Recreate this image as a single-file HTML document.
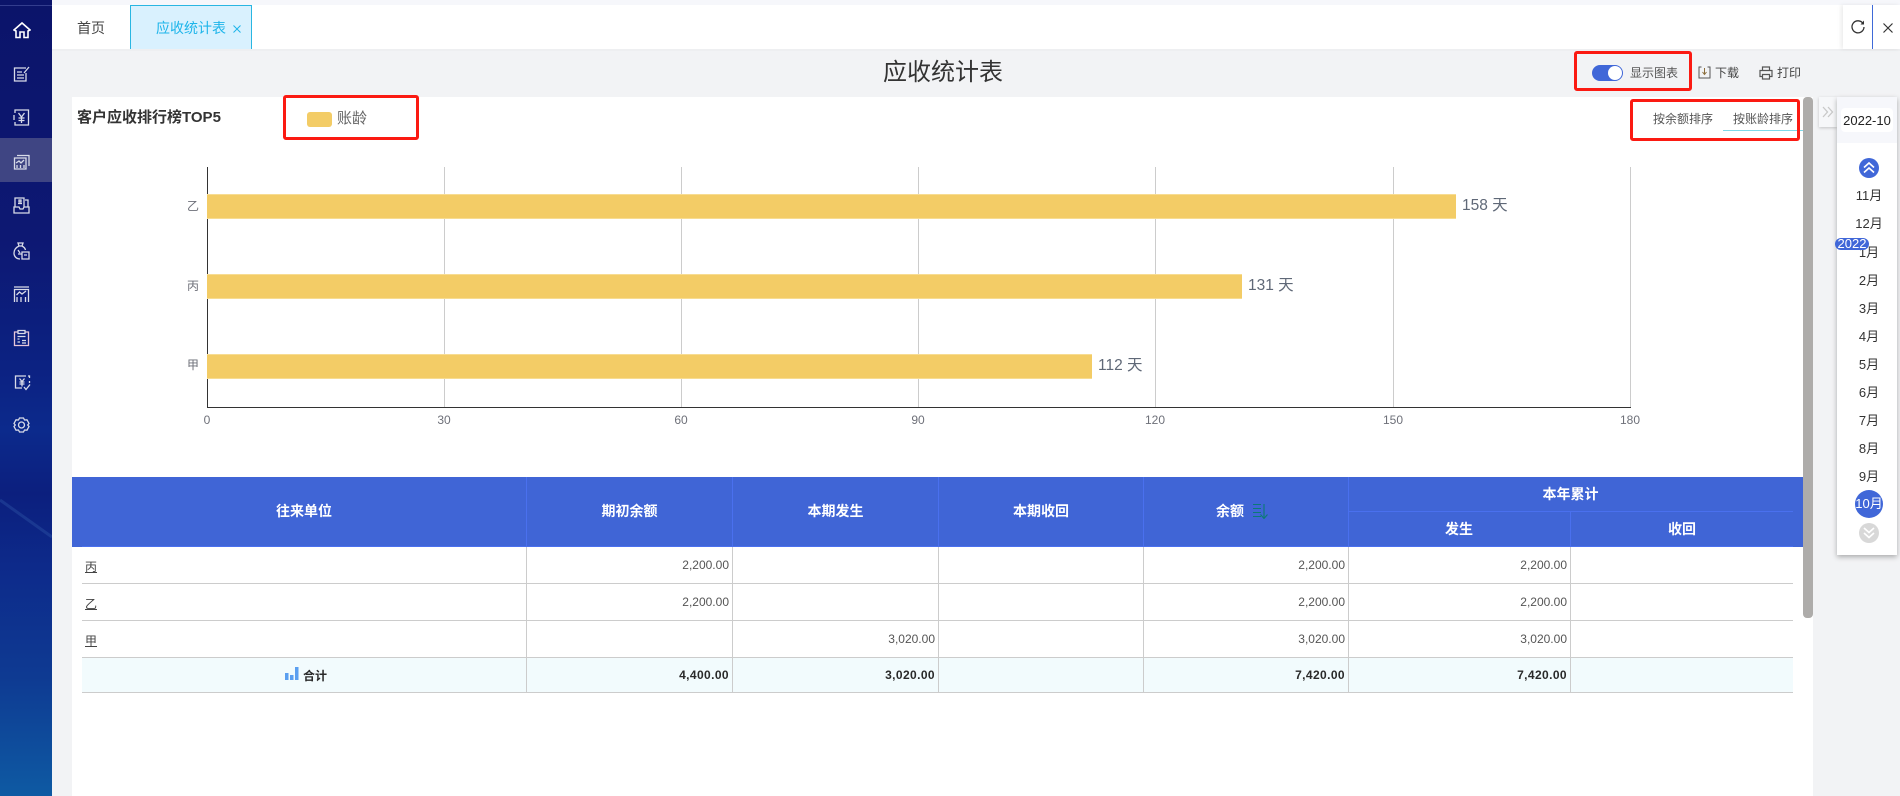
<!DOCTYPE html>
<html lang="zh-CN"><head><meta charset="utf-8"><title>应收统计表</title>
<style>
*{box-sizing:border-box}
html,body{margin:0;padding:0;width:1900px;height:796px;overflow:hidden;background:#f2f3f5;font-family:"Liberation Sans","Noto Sans CJK SC",sans-serif;color:#333}
.a{position:absolute}
.t{position:absolute;white-space:nowrap;line-height:16px;font-size:12px}
.line{position:absolute;background:#ccc}
.redbox{position:absolute;border:3px solid #fb1a12;border-radius:3px}
.mon{position:absolute;left:1839px;width:60px;text-align:center;font-size:12px;line-height:16px;color:#333}
.n{position:absolute;width:120px;text-align:right;font-size:12px;line-height:16px;color:#555;white-space:nowrap}
.b{font-weight:bold;color:#2a2a2a}
.n.b{letter-spacing:.4px}
.h{position:absolute;color:#fff;font-weight:bold;font-size:13px;line-height:16px;text-align:center;white-space:nowrap}
.u{position:absolute;left:85px;font-size:12px;line-height:16px;color:#444;text-decoration:underline}
.tick{position:absolute;top:412px;width:40px;text-align:center;font-size:12px;line-height:16px;color:#6e7079}
.yl{position:absolute;left:187px;font-size:12px;line-height:16px;color:#6e7079}
.val{position:absolute;font-size:15.500px;line-height:18px;color:#5f6877;white-space:nowrap}
.bar{position:absolute;left:207px;height:25px;background:#f3cc66;border-top:1px solid #f7dc92;border-bottom:1px solid #f7dc92}
.ic{position:absolute;fill:none;stroke:#d8dbe8;stroke-width:1.3}
</style></head><body>

<!-- sidebar -->
<div class="a" style="left:0;top:0;width:52px;height:796px;background:linear-gradient(180deg,#0b146a 0,#0d1873 30%,#0c2384 48%,#0c2a8c 54%,#0c1f7e 62%,#0d2b8b 72%,#0e3a92 85%,#0e5aa3 100%)"></div>
<svg class="a" style="left:0;top:490px" width="52" height="60"><path d="M0 10L52 47" stroke="#2f58a8" stroke-width="3" opacity=".4" fill="none"/></svg>
<div class="a" style="left:0;top:5px;width:52px;height:1px;background:#333d8e"></div>
<div class="a" style="left:0;top:138px;width:52px;height:44px;background:#3f4583"></div>

<svg class="ic" style="left:13px;top:21px;stroke:#fff;stroke-width:1.6" width="18" height="18" viewBox="0 0 18 18"><path d="M1 9L9 2L17 9L15 10V16.500H11V11H7V16.500H3V10Z"/></svg>
<svg class="ic" style="left:13px;top:66px" width="18" height="16" viewBox="0 0 18 16"><path d="M13 2H1.500V15H13V7M4 6H9M4 9H11M4 12H11"/><path d="M11 7L16 1"/></svg>
<svg class="ic" style="left:13px;top:109px" width="17" height="17" viewBox="0 0 17 17"><path d="M2 4V1H15.500V16H2V13M1 6V11" /><path d="M5.500 4L8.500 8L11.500 4M8.500 8V14M5.500 9H11.500M5.500 11.500H11.500"/></svg>
<svg class="ic" style="left:13px;top:153px" width="17" height="17" viewBox="0 0 17 17"><path d="M4 2.500H16V13M1.500 5H13V16H1.500Z"/><path d="M3 10L6 8L8 10L11 7M4 15V12M7.500 15V12M11 15V12"/></svg>
<svg class="ic" style="left:13px;top:197px" width="17" height="17" viewBox="0 0 17 17"><path d="M2 10V1H11V10M12 3H15V10M1 10H6L7 12H10L11 10H16V16H1Z"/><path d="M5 6.500H9M6 3H8V5H6Z"/></svg>
<svg class="ic" style="left:13px;top:242px" width="17" height="18" viewBox="0 0 17 18"><path d="M5 1H10L9 4H6ZM6 4C2 6 1 9 1 11C1 15 4 17 7 17M9 4C11 5 12 6 12.500 8"/><path d="M5 8L7 11M5 12H9M9 10H16V17H9ZM11 13H14"/></svg>
<svg class="ic" style="left:13px;top:286px" width="17" height="17" viewBox="0 0 17 17"><path d="M1 1H16M1.500 16V3.500H15.500V16M4 16V11M8 16V11M12.500 16V11"/><path d="M3.500 9L6.500 6L9 8L13 5"/></svg>
<svg class="ic" style="left:13px;top:329px" width="17" height="18" viewBox="0 0 17 18"><path d="M5 3H1.500V16.500H15.500V3H12" stroke="#e7c6d8"/><path d="M5 1.500H12V4.500H5ZM4.500 7.500H12.500M4.500 10H6.500M9 11.500H13M4.500 13H7M9 14H13"/></svg>
<svg class="ic" style="left:14px;top:375px" width="17" height="16" viewBox="0 0 17 16"><path d="M12 1H1.500V13H8M14 1H15.500V3M15.500 6V8"/><path d="M5.500 3.500L8 6.500L10.500 3.500M8 6.500V11.500M5.500 7H10.500M5.500 9H10.500"/><path d="M10 12L12 14.500L16 9.500"/></svg>
<svg class="ic" style="left:13px;top:417px" width="17" height="16" viewBox="0 0 17 16"><path d="M6.500 1H10.500L11.500 3L14 2.800L16 6.500L14.700 8L16 9.500L14 13.200L11.500 13L10.500 15H6.500L5.500 13L3 13.200L1 9.500L2.300 8L1 6.500L3 2.800L5.500 3Z"/><circle cx="8.500" cy="8" r="3"/></svg>

<!-- tab bar -->
<div class="a" style="left:52px;top:0;width:1848px;height:5px;background:#f6f7fb"></div>
<div class="a" style="left:52px;top:5px;width:1848px;height:44px;background:#fff"></div>
<div class="a" style="left:52px;top:49px;width:1848px;height:2px;background:#eeeff1"></div>
<div class="t" style="left:77px;top:20px;font-size:14px;color:#444">首页</div>
<div class="a" style="left:130px;top:5px;width:122px;height:44px;background:#d9f1fe;border:1px solid #29b6e2;border-bottom:none"></div>
<div class="t" style="left:156px;top:20px;font-size:14px;color:#1eb5ea">应收统计表</div>
<svg class="a" style="left:233px;top:25px" width="8" height="8"><path d="M.5.5L7.500 7.500M7.500.5L.5 7.500" stroke="#1eb5ea" fill="none"/></svg>

<div class="a" style="left:1843px;top:5px;width:57px;height:44px;background:#fff;box-shadow:-2px 0 4px rgba(0,0,0,.08)"></div>
<div class="a" style="left:1872px;top:5px;width:1px;height:44px;background:#3f6ad8"></div>
<svg class="a" style="left:1850px;top:19px" width="16" height="16" viewBox="0 0 16 16"><path d="M13 4.500A6 6 0 1 0 14 8" stroke="#333" stroke-width="1.300" fill="none"/><path d="M14 1.500V5.500H10.500Z" fill="#333"/></svg>
<svg class="a" style="left:1883px;top:23px" width="10" height="10"><path d="M.5.5L9.500 9.500M9.500.5L.5 9.500" stroke="#333" stroke-width="1.200" fill="none"/></svg>

<!-- page title -->
<div class="t" style="left:883px;top:57px;font-size:24px;line-height:32px;color:#333">应收统计表</div>
<div class="a" style="left:1592px;top:65px;width:31px;height:16px;border-radius:8px;background:#4067d8"></div>
<div class="a" style="left:1608px;top:66px;width:14px;height:14px;border-radius:50%;background:#fff"></div>
<div class="t" style="left:1630px;top:65px;color:#555">显示图表</div>
<svg class="a" style="left:1698px;top:66px" width="13" height="13" viewBox="0 0 13 13"><path d="M3.500 1H1V12H12V1H9.500" stroke="#555" fill="none"/><path d="M6.500 2V8M4.500 6L6.500 8.500L8.500 6" stroke="#8a6d3b" fill="none"/></svg>
<div class="t" style="left:1715px;top:65px;color:#444">下载</div>
<svg class="a" style="left:1759px;top:66px" width="14" height="14" viewBox="0 0 14 14"><path d="M3.500 4V1H10.500V4M3.500 10.500H1V4.500H13V10.500H10.500M3.500 8.500H10.500V13H3.500Z" stroke="#555" stroke-width="1.200" fill="none"/></svg>
<div class="t" style="left:1777px;top:65px;color:#444">打印</div>

<!-- card -->
<div class="a" style="left:72px;top:97px;width:1741px;height:699px;background:#fff"></div>
<div class="a" style="left:1803px;top:97px;width:10px;height:521px;background:#aeacaa;border-radius:4px"></div>

<div class="t" style="left:77px;top:110px;font-size:15px;font-weight:bold;color:#333">客户应收排行榜TOP5</div>
<div class="a" style="left:307px;top:112px;width:25px;height:15px;border-radius:3px;background:#f3cc66"></div>
<div class="t" style="left:337px;top:111px;font-size:15px;color:#666">账龄</div>
<div class="t" style="left:1653px;top:111px;color:#555">按余额排序</div>
<div class="t" style="left:1733px;top:111px;color:#555">按账龄排序</div>
<div class="a" style="left:1723px;top:130px;width:80px;height:1px;background:#7dd8e8"></div>

<!-- chart -->
<div class="line" style="left:444px;top:167px;width:1px;height:240px"></div>
<div class="line" style="left:681px;top:167px;width:1px;height:240px"></div>
<div class="line" style="left:918px;top:167px;width:1px;height:240px"></div>
<div class="line" style="left:1155px;top:167px;width:1px;height:240px"></div>
<div class="line" style="left:1393px;top:167px;width:1px;height:240px"></div>
<div class="line" style="left:1630px;top:167px;width:1px;height:240px"></div>
<div class="a" style="left:207px;top:167px;width:1px;height:241px;background:#333"></div>
<div class="a" style="left:207px;top:407px;width:1424px;height:1px;background:#333"></div>
<div class="bar" style="top:194px;width:1249px"></div>
<div class="bar" style="top:274px;width:1035px"></div>
<div class="bar" style="top:354px;width:885px"></div>
<div class="yl" style="top:198px">乙</div>
<div class="yl" style="top:278px">丙</div>
<div class="yl" style="top:357px">甲</div>
<div class="val" style="left:1462px;top:197px">158 天</div>
<div class="val" style="left:1248px;top:277px">131 天</div>
<div class="val" style="left:1098px;top:357px">112 天</div>
<div class="tick" style="left:187px">0</div>
<div class="tick" style="left:424px">30</div>
<div class="tick" style="left:661px">60</div>
<div class="tick" style="left:898px">90</div>
<div class="tick" style="left:1135px">120</div>
<div class="tick" style="left:1373px">150</div>
<div class="tick" style="left:1610px">180</div>

<!-- table header -->
<div class="a" style="left:72px;top:477px;width:1731px;height:70px;background:#4065d6"></div>
<div class="a" style="left:82px;top:546px;width:1711px;height:1px;background:#4a70ee"></div>
<div class="a" style="left:526px;top:477px;width:1px;height:69px;background:#4a70ee"></div>
<div class="a" style="left:732px;top:477px;width:1px;height:69px;background:#4a70ee"></div>
<div class="a" style="left:938px;top:477px;width:1px;height:69px;background:#4a70ee"></div>
<div class="a" style="left:1143px;top:477px;width:1px;height:69px;background:#4a70ee"></div>
<div class="a" style="left:1348px;top:477px;width:1px;height:69px;background:#4a70ee"></div>
<div class="a" style="left:1570px;top:511px;width:1px;height:35px;background:#4a70ee"></div>
<div class="a" style="left:1348px;top:511px;width:445px;height:1px;background:#4a70ee"></div>
<div class="h" style="left:82px;top:503px;width:444px;font-size:14px">往来单位</div>
<div class="h" style="left:527px;top:503px;width:205px;font-size:14px">期初余额</div>
<div class="h" style="left:733px;top:503px;width:205px;font-size:14px">本期发生</div>
<div class="h" style="left:939px;top:503px;width:204px;font-size:14px">本期收回</div>
<div class="h" style="left:1216px;top:503px;font-size:14px">余额</div>
<svg class="a" style="left:1252px;top:503px" width="16" height="16" viewBox="0 0 16 16"><path d="M1 1.500H9M1 5.500H9M1 9.500H9M1 13.500H9" stroke="#0b7a75" stroke-width="1.100" fill="none"/><path d="M12 1V15M8.500 11.500L12 15.500L15.500 11.500" stroke="#0b7a75" stroke-width="1.100" fill="none"/></svg>
<div class="h" style="left:1348px;top:486px;width:445px;font-size:14px">本年累计</div>
<div class="h" style="left:1348px;top:521px;width:222px;font-size:14px">发生</div>
<div class="h" style="left:1571px;top:521px;width:222px;font-size:14px">收回</div>

<!-- table body -->
<div class="a" style="left:82px;top:657px;width:1711px;height:35px;background:#f2fbfd"></div>
<div class="line" style="left:82px;top:583px;width:1711px;height:1px"></div>
<div class="line" style="left:82px;top:620px;width:1711px;height:1px"></div>
<div class="line" style="left:82px;top:657px;width:1711px;height:1px"></div>
<div class="line" style="left:82px;top:692px;width:1711px;height:1px"></div>
<div class="line" style="left:526px;top:547px;width:1px;height:145px"></div>
<div class="line" style="left:732px;top:547px;width:1px;height:145px"></div>
<div class="line" style="left:938px;top:547px;width:1px;height:145px"></div>
<div class="line" style="left:1143px;top:547px;width:1px;height:145px"></div>
<div class="line" style="left:1348px;top:547px;width:1px;height:145px"></div>
<div class="line" style="left:1570px;top:547px;width:1px;height:145px"></div>

<div class="u" style="top:559px">丙</div>
<div class="u" style="top:596px">乙</div>
<div class="u" style="top:633px">甲</div>

<div class="n" style="left:609px;top:557px">2,200.00</div>
<div class="n" style="left:1225px;top:557px">2,200.00</div>
<div class="n" style="left:1447px;top:557px">2,200.00</div>
<div class="n" style="left:609px;top:594px">2,200.00</div>
<div class="n" style="left:1225px;top:594px">2,200.00</div>
<div class="n" style="left:1447px;top:594px">2,200.00</div>
<div class="n" style="left:815px;top:631px">3,020.00</div>
<div class="n" style="left:1225px;top:631px">3,020.00</div>
<div class="n" style="left:1447px;top:631px">3,020.00</div>

<svg class="a" style="left:285px;top:666px" width="14" height="14"><rect x="0" y="7" width="3.500" height="7" fill="#5b9ff0"/><rect x="5" y="9" width="3.500" height="5" fill="#5b9ff0"/><rect x="10" y="1" width="3.500" height="13" fill="#5b9ff0"/></svg>
<div class="t b" style="left:303px;top:668px">合计</div>
<div class="n b" style="left:609px;top:667px">4,400.00</div>
<div class="n b" style="left:815px;top:667px">3,020.00</div>
<div class="n b" style="left:1225px;top:667px">7,420.00</div>
<div class="n b" style="left:1447px;top:667px">7,420.00</div>

<!-- month panel -->
<div class="a" style="left:1819px;top:97px;width:18px;height:30px;background:#f6f7f9;box-shadow:0 1px 3px rgba(0,0,0,.2)"></div>
<svg class="a" style="left:1822px;top:106px" width="12" height="12"><path d="M1 1L5.500 6L1 11M6 1L10.500 6L6 11" stroke="#c8c8c8" stroke-width="1.300" fill="none"/></svg>
<div class="a" style="left:1837px;top:97px;width:60px;height:458px;background:#fff;box-shadow:0 2px 5px rgba(0,0,0,.3)"></div>
<div class="a" style="left:1837px;top:97px;width:60px;height:46px;background:#f6f7fb"></div>
<div class="a" style="left:1841px;top:108px;width:52px;height:24px;background:#fff;border-radius:4px"></div>
<div class="t" style="left:1837px;width:60px;top:113px;text-align:center;color:#222;font-size:13px">2022-10</div>
<div class="a" style="left:1859px;top:158px;width:20px;height:20px;border-radius:50%;background:#4067d8"></div>
<svg class="a" style="left:1863px;top:161px" width="12" height="14"><path d="M1 6.500L6 2L11 6.500M1 11.500L6 7L11 11.500" stroke="#fff" stroke-width="1.600" fill="none"/></svg>
<div class="mon" style="top:188px;font-size:13px">11月</div>
<div class="mon" style="top:216px;font-size:13px">12月</div>
<div class="mon" style="top:245px;font-size:13px">1月</div>
<div class="mon" style="top:273px;font-size:13px">2月</div>
<div class="mon" style="top:301px;font-size:13px">3月</div>
<div class="mon" style="top:329px;font-size:13px">4月</div>
<div class="mon" style="top:357px;font-size:13px">5月</div>
<div class="mon" style="top:385px;font-size:13px">6月</div>
<div class="mon" style="top:413px;font-size:13px">7月</div>
<div class="mon" style="top:441px;font-size:13px">8月</div>
<div class="mon" style="top:469px;font-size:13px">9月</div>
<div class="a" style="left:1835px;top:238px;width:34px;height:12px;border-radius:6px;background:#4067d8;color:#fff;font-size:13px;line-height:12px;text-align:center">2022</div>
<div class="a" style="left:1855px;top:490px;width:28px;height:28px;border-radius:50%;background:#4067d8"></div>
<div class="mon" style="top:496px;color:#fff;left:1839px;font-size:13px">10月</div>
<div class="a" style="left:1859px;top:523px;width:20px;height:20px;border-radius:50%;background:#d8d8d8"></div>
<svg class="a" style="left:1863px;top:526px" width="12" height="14"><path d="M1 2L6 6.500L11 2M1 7L6 11.500L11 7" stroke="#fff" stroke-width="1.600" fill="none"/></svg>

<!-- annotation boxes -->
<div class="redbox" style="left:283px;top:95px;width:136px;height:45px"></div>
<div class="redbox" style="left:1574px;top:51px;width:118px;height:40px"></div>
<div class="redbox" style="left:1630px;top:99px;width:170px;height:42px"></div>
</body></html>
